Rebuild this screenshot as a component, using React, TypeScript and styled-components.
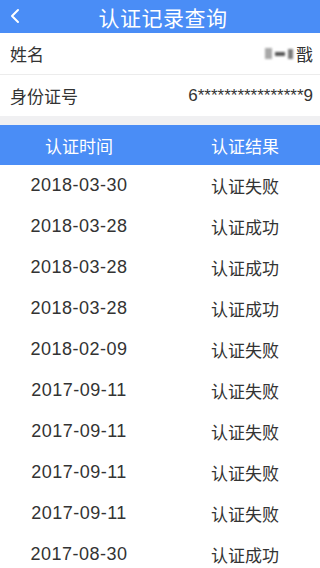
import { Fragment } from "react";
import styled, { createGlobalStyle } from "styled-components";

const GlobalStyle = createGlobalStyle`
    html, body {
        margin: 0;
        padding: 0;
        background: #ffffff;
    }
    body {
        font-family: "Liberation Sans", "Noto Sans CJK SC", sans-serif;
        color: #333333;
    }
`;

const Page = styled.div`
    width: 320px;
    min-height: 568px;
    background: #ffffff;
`;

const TopBar = styled.header`
    height: 33px;
    background: #4a8df6;
    display: flex;
    align-items: center;
    justify-content: center;
    position: relative;
`;

const BackButton = styled.button`
    position: absolute;
    left: 4px;
    top: 5px;
    width: 22px;
    height: 22px;
    padding: 0;
    border: none;
    background: none;
    display: flex;
    align-items: center;
    justify-content: center;
`;

const Title = styled.h1`
    margin: 0 0 0 6px;
    font-size: 21px;
    font-weight: normal;
    color: #ffffff;
    letter-spacing: 0.5px;
`;

const InfoRow = styled.div<{ $last?: boolean }>`
    height: 41px;
    display: flex;
    align-items: center;
    justify-content: space-between;
    padding: 0 7px 0 10px;
    border-bottom: ${(p) => (p.$last ? "none" : "1px solid #ececec")};
    font-size: 17px;
    color: #333333;
`;

const Masked = styled.span`
    display: flex;
    align-items: center;
    gap: 3px;
`;

const Pixel = styled.span<{ $w: number; $h: number; $c: string }>`
    display: inline-block;
    width: ${(p) => p.$w}px;
    height: ${(p) => p.$h}px;
    background: ${(p) => p.$c};
    filter: blur(0.8px);
`;

const IdValue = styled.span`
    font-size: 17px;
`;

const Gap = styled.div`
    height: 9px;
    background: #f0f0f2;
`;

const Grid = styled.div`
    display: grid;
    grid-template-columns: 158px 1fr;
`;

const HeadCell = styled.div<{ $right?: boolean }>`
    height: 40px;
    background: #4a8df6;
    color: #ffffff;
    font-size: 17px;
    display: flex;
    align-items: center;
    justify-content: center;
    padding-left: ${(p) => (p.$right ? "12px" : "0")};
`;

const DateCell = styled.div`
    height: 41px;
    display: flex;
    align-items: center;
    justify-content: center;
    font-size: 18px;
    letter-spacing: 0.5px;
    color: #333333;
`;

const ResultCell = styled.div`
    height: 41px;
    display: flex;
    align-items: center;
    justify-content: center;
    padding-left: 12px;
    font-size: 17px;
    color: #333333;
`;

const records: [string, string][] = [
    ["2018-03-30", "认证失败"],
    ["2018-03-28", "认证成功"],
    ["2018-03-28", "认证成功"],
    ["2018-03-28", "认证成功"],
    ["2018-02-09", "认证失败"],
    ["2017-09-11", "认证失败"],
    ["2017-09-11", "认证失败"],
    ["2017-09-11", "认证失败"],
    ["2017-09-11", "认证失败"],
    ["2017-08-30", "认证成功"],
];

export default function App() {
    return (
        <Page>
            <GlobalStyle />
            <TopBar>
                <BackButton aria-label="back">
                    <svg width="12" height="16" viewBox="0 0 12 16">
                        <path d="M9 2 L3 8 L9 14" stroke="#ffffff" strokeWidth="2" fill="none" strokeLinecap="round" strokeLinejoin="round" />
                    </svg>
                </BackButton>
                <Title>认证记录查询</Title>
            </TopBar>
            <InfoRow>
                <span>姓名</span>
                <Masked>
                    <Pixel $w={7} $h={11} $c="#a8a8a8" />
                    <Pixel $w={10} $h={4} $c="#555555" />
                    <Pixel $w={5} $h={10} $c="#7a7a7a" />
                    <span>戬</span>
                </Masked>
            </InfoRow>
            <InfoRow $last>
                <span>身份证号</span>
                <IdValue>6****************9</IdValue>
            </InfoRow>
            <Gap />
            <Grid>
                <HeadCell>认证时间</HeadCell>
                <HeadCell $right>认证结果</HeadCell>
                {records.map(([date, result], i) => (
                    <Fragment key={i}>
                        <DateCell>{date}</DateCell>
                        <ResultCell>{result}</ResultCell>
                    </Fragment>
                ))}
            </Grid>
        </Page>
    );
}
